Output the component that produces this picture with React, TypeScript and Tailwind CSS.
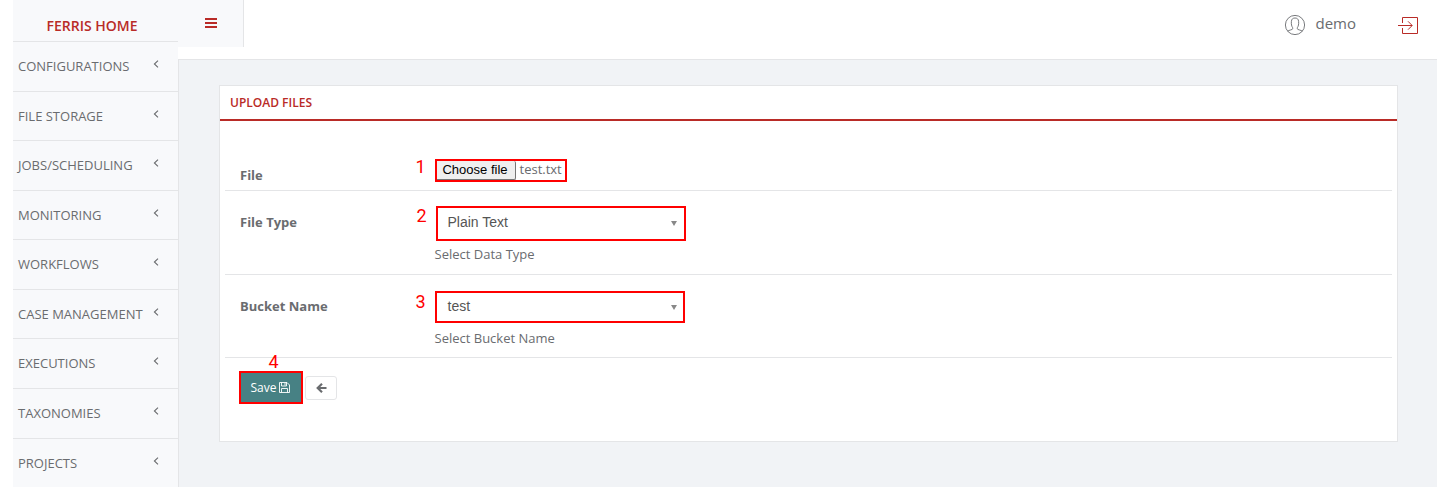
import React from "react";

const menu = [
  { label: "CONFIGURATIONS", height: "h-[50px]" },
  { label: "FILE STORAGE", height: "h-[49px]" },
  { label: "JOBS/SCHEDULING", height: "h-[50px]" },
  { label: "MONITORING", height: "h-[49px]" },
  { label: "WORKFLOWS", height: "h-[50px]" },
  { label: "CASE MANAGEMENT", height: "h-[49px]" },
  { label: "EXECUTIONS", height: "h-[50px]" },
  { label: "TAXONOMIES", height: "h-[50px]" },
  { label: "PROJECTS", height: "h-[50px]" },
];

function Sidebar() {
  return (
    <aside className="flex w-[166px] shrink-0 flex-col border-r border-[#e4e5e7] bg-[#f8f9fb]">
      <div className="flex h-[42px] shrink-0 justify-center border-b border-[#e4e5e7] pr-[7px] pt-[16px] text-[14px] font-semibold leading-[20px] text-[#b92b27]">
        FERRIS HOME
      </div>
      {menu.map(({ label, height }) => (
        <div
          key={label}
          className={`flex shrink-0 justify-between border-b border-[#e4e5e7] pl-[5px] pr-[19px] pt-[14px] text-[13px] leading-[20px] ${height}`}
        >
          <span className="whitespace-nowrap">{label}</span>
          <svg width="6" height="8" viewBox="0 0 6 8" className="mt-[4px]" fill="none" stroke="#6a6c6f" strokeWidth="1.1">
            <path d="M5 .6 1.4 4 5 7.4" />
          </svg>
        </div>
      ))}
    </aside>
  );
}

function TopBar() {
  return (
    <header className="flex h-[60px] shrink-0 items-start justify-between border-b border-[#e4e5e7] bg-white">
      <div className="flex h-[47px] w-[66px] justify-center border-r border-[#e4e5e7] bg-[#f8f9fb] pl-px pt-[18px]">
        <svg width="12" height="10" viewBox="0 0 12 10" fill="#b92b27">
          <path d="M0 0h12v2H0zM0 4h12v2H0zM0 8h12v2H0z" />
        </svg>
      </div>
      <div className="flex pr-[17px] pt-[14px]">
        <svg width="22" height="22" viewBox="0 0 22 22" fill="none" stroke="#6a6c6f" strokeWidth="0.9">
          <circle cx="11" cy="11" r="9.6" />
          <path d="M3.7 17.2c1.3-1.2 4.8-1.3 5.1-2.5.2-1-.6-1.6-1-2.6-.5-1.3-.6-3.3-.4-4.8C7.6 5 9 4 11 4s3.4 1 3.6 3.3c.2 1.5.1 3.5-.4 4.8-.4 1-1.2 1.6-1 2.6.3 1.2 3.8 1.3 5.1 2.5" />
        </svg>
        <span className="-mt-px ml-[9px] text-[15px] leading-[20px]">demo</span>
        <svg width="22" height="20" viewBox="0 0 22 20" className="ml-[42px] mt-[2px]" fill="none" stroke="#b92b27" strokeWidth="1">
          <path d="M4.5 7V1.5h15v16h-15V12M0 9.5h14M10 5.3l4.2 4.2-4.2 4.2" />
        </svg>
      </div>
    </header>
  );
}

function Marker({ n, className }: { n: number; className: string }) {
  return (
    <span className={`absolute font-[Roboto,sans-serif] text-[18px] leading-[20px] text-[#f00] ${className}`}>{n}</span>
  );
}

function SelectBox({ value }: { value: string }) {
  return (
    <>
      <span className="font-['Liberation_Sans',Arial,sans-serif] text-[14px] leading-[20px] text-[#555]">{value}</span>
      <svg width="6" height="5" viewBox="0 0 6 5" className="mt-[3px] shrink-0" fill="#888">
        <path d="M0 0h6L3 5z" />
      </svg>
    </>
  );
}

export default function App() {
  return (
    <div className="flex h-[487px] w-[1437px] overflow-hidden bg-white pl-[13px] font-['Open_Sans',sans-serif] text-[13px] text-[#6a6c6f]">
      <Sidebar />
      <div className="-ml-px flex min-w-0 grow flex-col">
        <TopBar />
        <main className="grow border-l border-[#e4e5e7] bg-[#f1f3f6] pl-[40px] pr-[39px] pt-[25px]">
          <section className="h-[357px] border border-[#e4e5e7] bg-white">
            <h2 className="h-[35px] border-b-2 border-[#b92b27] pl-[10px] pt-[7px] text-[12px] font-semibold leading-[20px] text-[#b92b27]">
              UPLOAD FILES
            </h2>
            <div className="px-[5px] leading-[20px]">
              <div className="flex h-[70px] border-b border-[#e4e5e7] pl-[15px]">
                <div className="w-[195px] pt-[44px] font-bold">File</div>
                <div className="relative mt-[38px] flex h-[23px] w-[132px] border-2 border-[#f00]">
                  <Marker n={1} className="-left-[21.5px] -top-[4px]" />
                  <button className="h-[19px] w-[79px] whitespace-nowrap rounded-r-[2px] border-b border-r border-[#767676] bg-[#efefef] pb-px pr-[2px] font-['Liberation_Sans',Arial,sans-serif] text-[13px] leading-[17px] text-black">
                    Choose file
                  </button>
                  <span className="-mt-[2px] ml-[3.5px] whitespace-nowrap">test.txt</span>
                </div>
              </div>
              <div className="flex h-[84px] border-b border-[#e4e5e7] pl-[15px]">
                <div className="w-[195px] pt-[21px] font-bold">File Type</div>
                <div className="pt-[15px]">
                  <div className="relative ml-px flex h-[35px] w-[250px] items-center justify-between border-2 border-[#f00] pb-[3px] pl-[9.5px] pr-[7px]">
                    <Marker n={2} className="-left-[21.5px] -top-[2px]" />
                    <SelectBox value="Plain Text" />
                  </div>
                  <div className="-ml-[0.5px] mt-[3px]">Select Data Type</div>
                </div>
              </div>
              <div className="flex h-[83px] border-b border-[#e4e5e7] pl-[15px]">
                <div className="w-[195px] pt-[21px] font-bold">Bucket Name</div>
                <div className="pt-[16px]">
                  <div className="relative flex h-[32px] w-[250px] items-center justify-between border-2 border-[#f00] pb-[2px] pl-[10.5px] pr-[6px]">
                    <Marker n={3} className="-left-[21.5px] -top-[1px]" />
                    <SelectBox value="test" />
                  </div>
                  <div className="-ml-[0.5px] mt-[5px]">Select Bucket Name</div>
                </div>
              </div>
              <div className="flex pl-[14px] pt-[13px]">
                <button className="relative flex h-[33px] w-[64px] items-center justify-center gap-[3px] border-2 border-[#f00] bg-[#478184] pr-px text-[12px] text-white">
                  <Marker n={4} className="-top-[21px] left-[27.5px]" />
                  Save
                  <svg width="11" height="11" viewBox="0 0 11 11" fill="none" stroke="white" strokeWidth="0.9">
                    <path d="M.5.5h7.5l2.5 2.5v7.5H.5zM2.5.5v3.500h5V.5M2.500 10.500V6.500h6v4M6 1v2.500" />
                  </svg>
                </button>
                <button className="ml-[2px] mt-[5px] flex h-[24px] w-[32px] items-center justify-center rounded-[3px] border border-[#e4e5e7] bg-white">
                  <svg width="11" height="10" viewBox="0 0 11 10" fill="none" stroke="#6a6c6f" strokeWidth="2.2">
                    <path d="M6 .8 1.700 5 6 9.200M1.700 5H10.500" />
                  </svg>
                </button>
              </div>
            </div>
          </section>
        </main>
      </div>
    </div>
  );
}
